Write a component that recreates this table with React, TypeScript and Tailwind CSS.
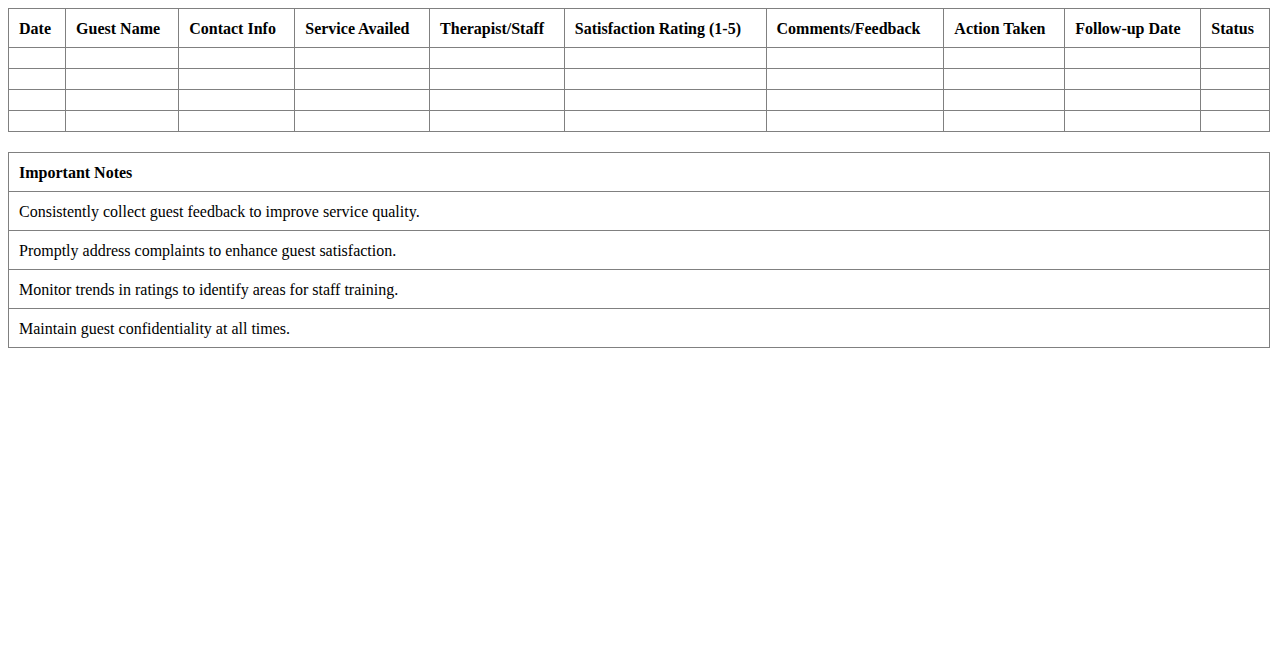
const columns = [
  "Date",
  "Guest Name",
  "Contact Info",
  "Service Availed",
  "Therapist/Staff",
  "Satisfaction Rating (1-5)",
  "Comments/Feedback",
  "Action Taken",
  "Follow-up Date",
  "Status",
];

const notes = [
  "Consistently collect guest feedback to improve service quality.",
  "Promptly address complaints to enhance guest satisfaction.",
  "Monitor trends in ratings to identify areas for staff training.",
  "Maintain guest confidentiality at all times.",
];

export default function App() {
  return (
    <div
      className="min-h-screen bg-white p-2 text-base leading-[18px] text-black"
      style={{ fontFamily: '"Liberation Serif", "Times New Roman", serif' }}
    >
      <table className="w-full border-collapse">
        <thead>
          <tr>
            {columns.map((c) => (
              <th
                key={c}
                className="border border-[#808080] px-[10px] pt-[11px] pb-[9px] text-left font-bold"
              >
                {c}
              </th>
            ))}
          </tr>
        </thead>
        <tbody>
          {[0, 1, 2, 3].map((r) => (
            <tr key={r}>
              {columns.map((c) => (
                <td key={c} className="border border-[#808080] p-[10px]"></td>
              ))}
            </tr>
          ))}
        </tbody>
      </table>

      <table className="mt-5 w-full border-collapse">
        <thead>
          <tr>
            <th className="border border-[#808080] px-[10px] pt-[11px] pb-[9px] text-left font-bold">
              Important Notes
            </th>
          </tr>
        </thead>
        <tbody>
          {notes.map((n) => (
            <tr key={n}>
              <td className="border border-[#808080] px-[10px] pt-[11px] pb-[9px]">
                {n}
              </td>
            </tr>
          ))}
        </tbody>
      </table>
    </div>
  );
}
